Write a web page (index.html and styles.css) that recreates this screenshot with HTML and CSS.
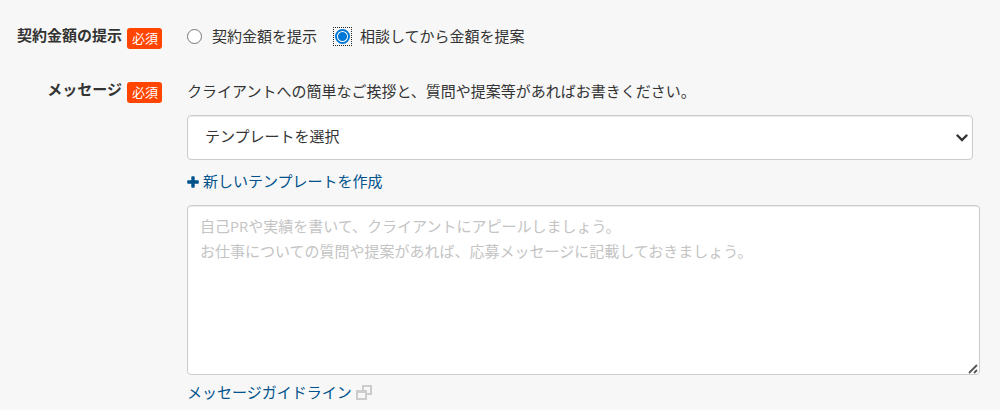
FILE: index.html
```html
<!DOCTYPE html>
<html lang="ja">
<head>
    <meta charset="UTF-8">
    <meta name="viewport" content="width=device-width, initial-scale=1.0">
    <title>応募メッセージ</title>
    <link rel="stylesheet" href="styles.css">
</head>
<body>
    <form class="proposal-form">
        <!-- 契約金額 -->
        <div class="form-row" role="radiogroup" aria-labelledby="priceLabel">
            <div class="form-label">
                <span id="priceLabel">契約金額の提示</span>
                <span class="required">必須</span>
            </div>
            <div class="form-field radio-list">
                <label class="radio-item" for="priceNow">
                    <span class="radio-mark"><input type="radio" name="price" id="priceNow"></span>
                    契約金額を提示
                </label>
                <label class="radio-item" for="priceLater">
                    <span class="radio-mark focused"><input type="radio" name="price" id="priceLater" checked></span>
                    相談してから金額を提案
                </label>
            </div>
        </div>

        <!-- メッセージ -->
        <div class="form-row">
            <div class="form-label">
                <label for="message">メッセージ</label>
                <span class="required">必須</span>
            </div>
            <div class="form-field">
                <p class="description">クライアントへの簡単なご挨拶と、質問や提案等があればお書きください。</p>
                <div class="select-box">
                    <select id="template" aria-label="テンプレート">
                        <option>テンプレートを選択</option>
                    </select>
                    <svg class="select-arrow" width="12" height="8" viewBox="0 0 12 8" aria-hidden="true">
                        <path d="M1.500 1.500 6 6l4.500-4.500" fill="none" stroke="#333" stroke-width="2.400" stroke-linecap="round"/>
                    </svg>
                </div>
                <a class="template-link" href="#">
                    <svg width="12" height="12" viewBox="0 0 12 12" aria-hidden="true">
                        <path d="M4.300 1q0-.8.8-.8h1.800q.8 0 .8.800v3.300H11q.8 0 .8.800v1.800q0 .8-.8.800H7.700V11q0 .8-.8.800H5.100q-.8 0-.8-.8V7.700H1q-.8 0-.8-.8V5.100q0-.8.8-.8h3.300z" fill="currentColor"/>
                    </svg>
                    新しいテンプレートを作成
                </a>
                <div class="message-box">
                    <textarea id="message" placeholder="自己PRや実績を書いて、クライアントにアピールしましょう。&#10;お仕事についての質問や提案があれば、応募メッセージに記載しておきましょう。"></textarea>
                    <svg class="resize-grip" width="10" height="10" viewBox="0 0 10 10" aria-hidden="true">
                        <path d="M1 9 9 1M6 9l3-3" fill="none" stroke="#555" stroke-width="1.800"/>
                    </svg>
                </div>
                <a class="guide-link" href="#">
                    メッセージガイドライン
                    <svg width="16" height="16" viewBox="0 0 16 16" aria-hidden="true">
                        <path d="M7 5V1h8v8h-4M1 6h9v8H1z" fill="none" stroke="#ccc" stroke-width="2"/>
                        <path d="M1 7h9" stroke="#ccc" stroke-width="2"/>
                    </svg>
                </a>
            </div>
        </div>
    </form>
</body>
</html>
```
FILE: styles.css
```css
* {
    box-sizing: border-box;
}
body {
    margin: 0;
    background: #f7f7f7;
    color: #333;
    font-family: "Open Sans", "Noto Sans CJK JP", sans-serif;
    font-size: 15px;
    line-height: 25px;
}
.proposal-form {
    padding: 23px 20px 0 0;
}
.form-row {
    display: flex;
    gap: 25px;
}
.form-row + .form-row {
    margin-top: 28px;
}
.form-label {
    display: flex;
    flex: 0 0 162px;
    justify-content: flex-end;
    align-items: flex-start;
    gap: 5px;
    font-weight: bold;
}
.required {
    margin-top: 5px;
    padding: 0 4px 0 5px;
    border-radius: 3px;
    background: #ff4500;
    color: #fff;
    font-size: 13px;
    font-weight: normal;
    line-height: 21px;
}
.form-field {
    flex: 1;
    min-width: 0;
}
.radio-list {
    display: flex;
    gap: 17px;
}
.radio-item {
    display: flex;
    align-items: center;
    gap: 9px;
}
.radio-mark {
    display: flex;
    padding: 0 1px 0 0;
}
.radio-mark input {
    flex: none;
    appearance: none;
    width: 15px;
    height: 15px;
    margin: 0;
    border: 1px solid #767676;
    border-radius: 50%;
    background: #fff;
}
.radio-mark input:checked {
    border: 2px solid #0078d7;
    background: radial-gradient(circle, #0078d7 4px, #fff 5px);
}
.focused {
    padding: 1px;
    outline: 1px dotted #222;
}
.description {
    margin: 2px 0 11px;
}
.select-box {
    position: relative;
    margin-right: 7px;
}
select,
textarea {
    display: block;
    width: 100%;
    margin: 0;
    border: 1px solid #ccc;
    border-radius: 4px;
    background: #fff;
    box-shadow: inset 0 1px 1px rgba(0, 0, 0, 0.08);
    color: #333;
    font: inherit;
}
select {
    appearance: none;
    height: 45px;
    padding: 0 32px 3px 17px;
}
.select-arrow {
    position: absolute;
    top: 19px;
    right: 5px;
    pointer-events: none;
}
a {
    color: #00528c;
    text-decoration: none;
}
.template-link {
    display: flex;
    align-items: center;
    gap: 4px;
    margin: 9px 0 11px;
}
.message-box {
    position: relative;
}
textarea {
    height: 170px;
    padding: 8px 12px;
    resize: none;
}
textarea::placeholder {
    color: #c4c4c4;
    opacity: 1;
}
.resize-grip {
    position: absolute;
    right: 2px;
    bottom: 1px;
    pointer-events: none;
}
.guide-link {
    display: flex;
    align-items: center;
    gap: 4px;
    margin-top: 5px;
}
```
